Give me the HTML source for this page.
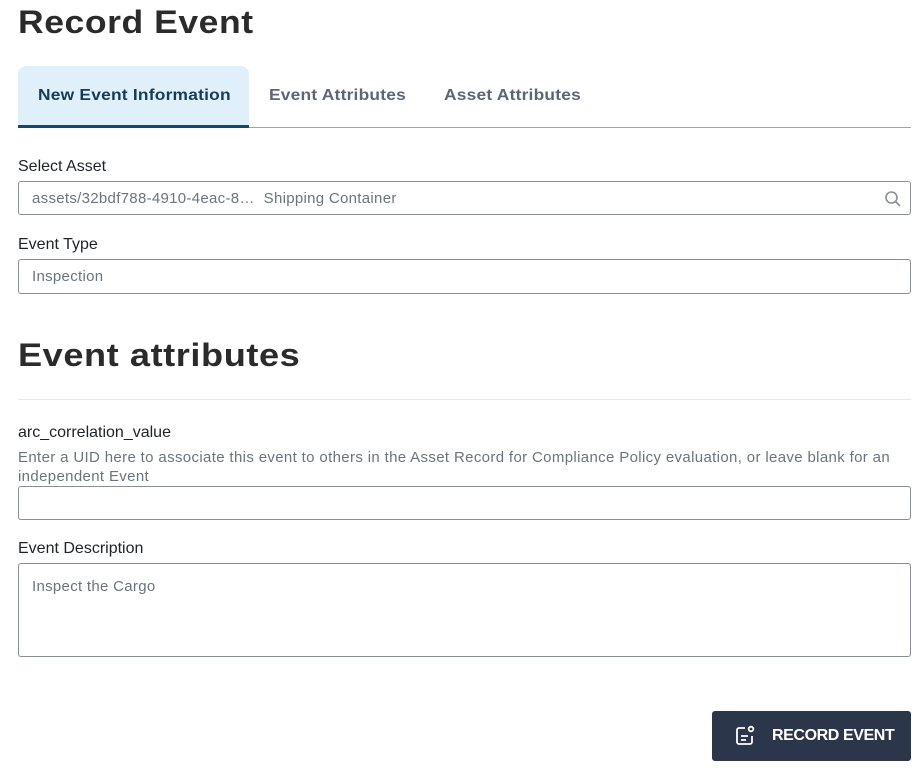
<!DOCTYPE html>
<html><head><style>
*{box-sizing:border-box;margin:0;padding:0}
body{width:920px;height:768px;background:#fff;font-family:"Liberation Sans",sans-serif;color:#1f2328;position:relative;overflow:hidden}
.abs{position:absolute}
h1{position:absolute;left:18px;top:4px;font-size:32px;font-weight:bold;color:#2b2b2b;letter-spacing:0.5px;transform:scaleX(1.11);transform-origin:left}
h2{position:absolute;left:18px;top:337px;font-size:32px;font-weight:bold;color:#2b2b2b;letter-spacing:0.5px;transform:scaleX(1.13);transform-origin:left}
.tab{position:absolute;top:66px;height:60px;line-height:60px;font-size:15.5px;font-weight:bold;color:#5d6677;letter-spacing:0.2px;transform:scaleX(1.12);transform-origin:left}
.label{position:absolute;left:18px;font-size:16px;color:#1f2328}
.input{position:absolute;left:18px;width:893px;border:1px solid #8a8f96;border-radius:3px;font-size:15px;color:#6c7380;padding-left:13px;letter-spacing:0.3px}
</style></head><body>
<h1>Record Event</h1>
<div class="abs" style="left:18px;top:66px;width:231px;height:60px;background:#e0f0fb;border-radius:8px 8px 0 0"></div>
<div class="abs" style="left:18px;top:127px;width:893px;height:1px;background:#a0a4a8"></div>
<div class="abs" style="left:18px;top:125px;width:231px;height:3px;background:#0f4a6e"></div>
<div class="tab" style="left:38px;color:#123c5a">New Event Information</div>
<div class="tab" style="left:269px">Event Attributes</div>
<div class="tab" style="left:444px">Asset Attributes</div>
<div class="label" style="top:158px">Select Asset</div>
<div class="input" style="top:181px;height:34px;line-height:34px">assets/32bdf788-4910-4eac-8…&nbsp; Shipping Container
<svg style="position:absolute;right:8px;top:8px" width="18" height="18" viewBox="0 0 18 18"><circle cx="7.5" cy="7.5" r="5.5" fill="none" stroke="#8a8f96" stroke-width="1.6"/><path d="M11.5 11.5L16 16" stroke="#8a8f96" stroke-width="1.6"/></svg></div>
<div class="label" style="top:236px">Event Type</div>
<div class="input" style="top:259px;height:35px;line-height:34px">Inspection</div>
<h2>Event attributes</h2>
<div class="abs" style="left:18px;top:399px;width:893px;height:1px;background:#e6e8ea"></div>
<div class="label" style="top:424px">arc_correlation_value</div>
<div class="abs" style="left:18px;top:448px;width:893px;font-size:15px;line-height:19px;color:#6c7380;letter-spacing:0.35px">Enter a UID here to associate this event to others in the Asset Record for Compliance Policy evaluation, or leave blank for an independent Event</div>
<div class="input" style="top:486px;height:34px"></div>
<div class="label" style="top:540px">Event Description</div>
<div class="input" style="top:563px;height:94px;padding-top:14px">Inspect the Cargo</div>
<div class="abs" style="left:712px;top:711px;width:199px;height:50px;background:#2b364a;border-radius:3px;color:#fff;font-weight:bold;font-size:16px;line-height:50px;padding-left:60px;letter-spacing:-0.4px">RECORD EVENT
<svg style="position:absolute;left:22px;top:14px" width="22" height="22" viewBox="0 0 22 22" fill="none" stroke="#fff" stroke-width="1.8"><path d="M11 3H5a2 2 0 0 0-2 2v12a2 2 0 0 0 2 2h11a2 2 0 0 0 2-2v-6"/><circle cx="17" cy="4" r="2.3"/><path d="M7 11h7M7 15h5"/></svg></div>
</body></html>
